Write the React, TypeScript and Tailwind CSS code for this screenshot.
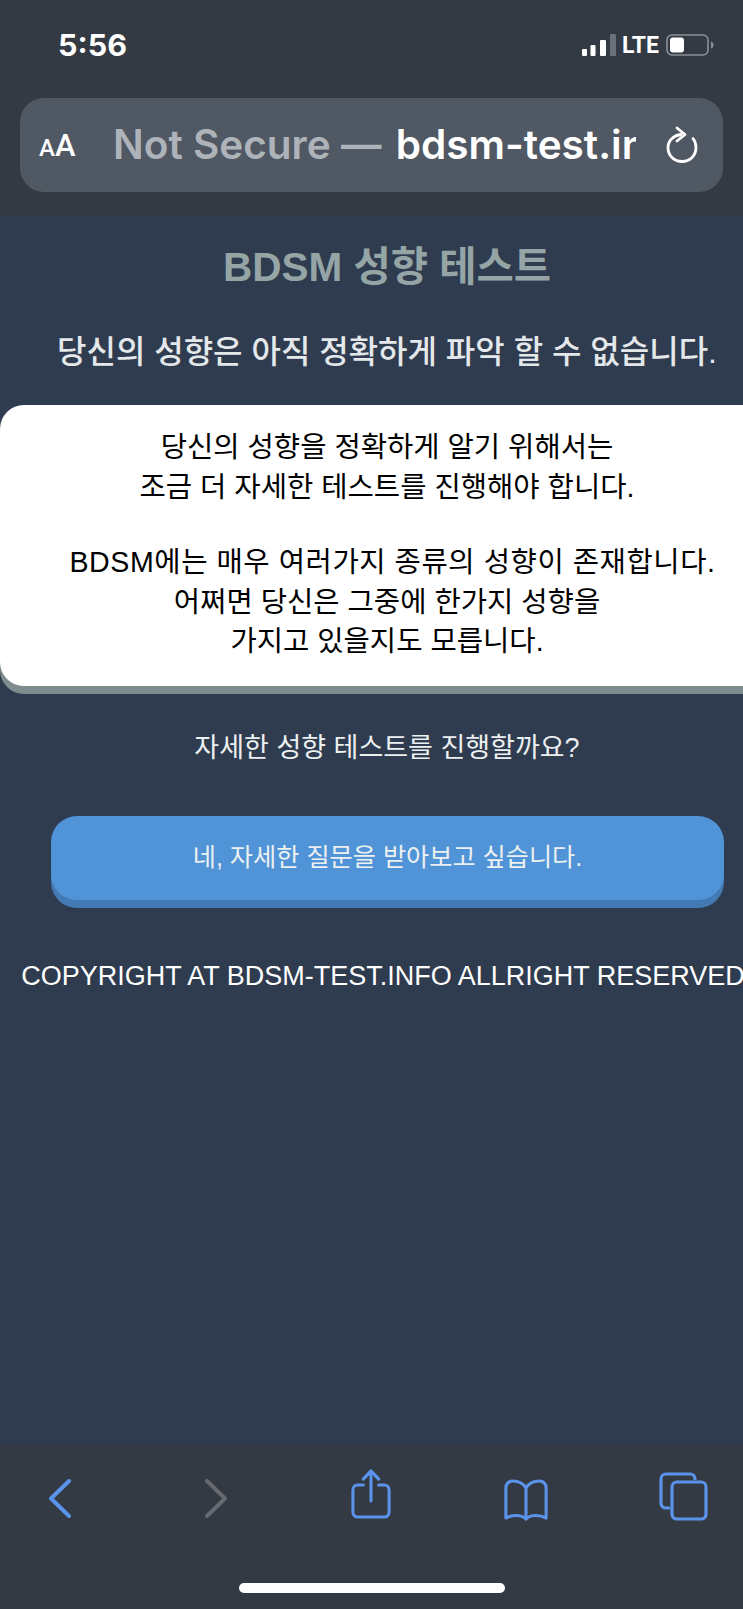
const KR = "font-['Liberation_Sans','Noto_Sans_CJK_KR',sans-serif]";

function SignalIcon() {
  return (
    <svg width="34" height="22" viewBox="0 0 34 22">
      <rect x="0" y="15" width="5" height="7" rx="1" fill="#fff" />
      <rect x="8.500" y="11" width="5" height="11" rx="1" fill="#fff" />
      <rect x="18" y="6" width="6" height="16" rx="1" fill="#fff" />
      <rect x="28" y="0" width="6" height="22" rx="1" fill="#6b717a" />
    </svg>
  );
}

function BatteryIcon() {
  return (
    <svg width="48" height="22" viewBox="0 0 48 22">
      <rect x="1" y="1" width="41" height="20" rx="5" fill="none" stroke="#8b9098" strokeWidth="1.6" />
      <rect x="4" y="3.500" width="14" height="15" rx="3" fill="#fff" />
      <path d="M45 7.500c2 .6 2.500 2 2.500 3.500s-.5 2.900-2.500 3.500z" fill="#8b9098" />
    </svg>
  );
}

function ReloadIcon() {
  return (
    <svg width="34" height="38" viewBox="0 0 34 38" fill="none" stroke="#fff" strokeWidth="2.800" strokeLinecap="round" strokeLinejoin="round">
      <path d="M16 8.500C8.500 9.500 3 14.500 3 21.500 3 29.500 9 35.500 17 35.500S31 29.500 31 21.500c0-3.500-1-6.500-3-9" />
      <path d="M12 2l8 6.500-8 6.500" />
    </svg>
  );
}

function NavIcons() {
  const blue = '#5a93ea';
  return (
    <div className="flex items-start pl-[48px]">
      <svg width="24" height="40" viewBox="0 0 24 40" fill="none" stroke={blue} strokeWidth="4" strokeLinecap="round" strokeLinejoin="round" className="mt-[6px]">
        <path d="M21 2 3 19.500 21 37" />
      </svg>
      <svg width="24" height="40" viewBox="0 0 24 40" fill="none" stroke="#666a70" strokeWidth="4" strokeLinecap="round" strokeLinejoin="round" className="ml-[132px] mt-[6px]">
        <path d="M3 2 21 19.500 3 37" />
      </svg>
      <svg width="40" height="50" viewBox="0 0 42 50" preserveAspectRatio="none" fill="none" stroke={blue} strokeWidth="3.200" strokeLinecap="round" strokeLinejoin="round" className="ml-[123px] mt-[-4px]">
        <path d="M13 16H7a5 5 0 0 0-5 5v22a5 5 0 0 0 5 5h28a5 5 0 0 0 5-5V21a5 5 0 0 0-5-5h-6" />
        <path d="M21 32V3M13 10l8-8 8 8" />
      </svg>
      <svg width="46" height="42" viewBox="0 0 48 42" preserveAspectRatio="none" fill="none" stroke={blue} strokeWidth="3.200" strokeLinecap="round" strokeLinejoin="round" className="ml-[112px] mt-[6px]">
        <path d="M24 9C21 4 16 2 10 2 6 2 3 5 3 9v30c6-3 16-4 21 1 5-5 15-4 21-1V9c0-4-3-7-7-7-6 0-11 2-14 7zM24 9v31" />
      </svg>
      <svg width="49" height="49" viewBox="0 0 49 49" fill="none" stroke={blue} strokeWidth="3.200" strokeLinejoin="round" className="ml-[110px] mt-[-1px]">
        <path d="M36 8V7a5 5 0 0 0-5-5H7a5 5 0 0 0-5 5v24a5 5 0 0 0 5 5h4" />
        <rect x="13" y="10" width="34" height="37" rx="5" />
      </svg>
    </div>
  );
}

export default function App() {
  return (
    <div className={`flex h-[1609px] w-[743px] flex-col overflow-hidden bg-[#2f3c4f] ${KR}`}>
      <header className="h-[217px] shrink-0 bg-[#343a43] pt-[28px]">
        <div className="flex h-[34px] items-center justify-between pl-[58px] pr-[29px] text-white">
          <span className="font-['Inter',sans-serif] text-[30.500px] font-bold leading-none">5:56</span>
          <div className="flex items-center">
            <SignalIcon />
            <span className="ml-[6px] font-['Roboto',sans-serif] text-[23px] font-bold leading-none">LTE</span>
            <div className="ml-[7px]">
              <BatteryIcon />
            </div>
          </div>
        </div>
        <div className="mx-[20px] mt-[36px] flex h-[94px] w-[703px] items-center rounded-[24px] bg-[#4f5863] pl-[19px] pr-[24px] text-white">
          <span className="w-[41px] shrink-0 font-['Roboto',sans-serif] font-medium leading-none">
            <span className="text-[24px]">A</span>
            <span className="text-[31px]">A</span>
          </span>
          <div className="ml-[33px] w-[523px] shrink-0 overflow-hidden whitespace-nowrap font-['Inter',sans-serif] text-[40.500px] font-semibold leading-none">
            <span className="text-[#aeb3ba]">Not Secure — </span>
            <span className="ml-[4px]">bdsm-test.info</span>
          </div>
          <div className="ml-auto">
            <ReloadIcon />
          </div>
        </div>
      </header>

      <main className="min-h-0 w-[774px] flex-1 text-center text-white">
        <h1 className="mt-[29px] text-[40.500px] font-bold leading-[42px] text-[#95a5a6]">BDSM 성향 테스트</h1>
        <p className="mt-[44px] text-[32px] font-medium leading-[40px] text-[#e4e8ea]">당신의 성향은 아직 정확하게 파악 할 수 없습니다.</p>
        <div className="mt-[33px] h-[281px] rounded-[24px] bg-white pt-[23px] text-[28.600px] leading-[39.500px] text-black shadow-[0_8px_0_#7f8c8d]">
          <p>당신의 성향을 정확하게 알기 위해서는</p>
          <p>조금 더 자세한 테스트를 진행해야 합니다.</p>
          <p className="mt-[36px] pl-[11px] tracking-[0.550px]">BDSM에는 매우 여러가지 종류의 성향이 존재합니다.</p>
          <p>어쩌면 당신은 그중에 한가지 성향을</p>
          <p>가지고 있을지도 모릅니다.</p>
        </div>
        <p className="mt-[42px] text-[27px] leading-[40px] text-[#ecf0f1]">자세한 성향 테스트를 진행할까요?</p>
        <button className="mx-[51px] mt-[48px] flex h-[84px] w-[673px] items-center justify-center rounded-[26px] bg-[#5094d7] text-[25.200px] text-[#ecf0f1] shadow-[0_8px_0_#437ab4]">
          네, 자세한 질문을 받아보고 싶습니다.
        </button>
        <p className="mt-[57px] whitespace-nowrap pr-[8px] text-[27px] leading-[38px]">COPYRIGHT AT BDSM-TEST.INFO ALLRIGHT RESERVED</p>
      </main>

      <footer className="h-[164px] shrink-0 bg-[#343a43] pt-[28px]">
        <NavIcons />
        <div className="mx-auto mt-[62px] h-[10px] w-[266px] rounded-full bg-white" />
      </footer>
    </div>
  );
}
